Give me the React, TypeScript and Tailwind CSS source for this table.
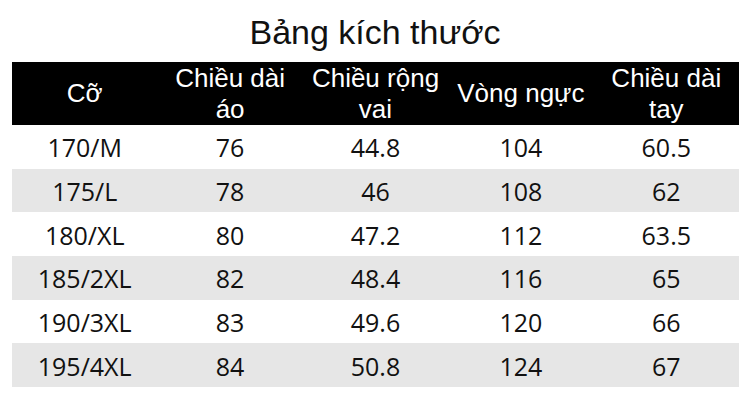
const headers: string[][] = [
  ["Cỡ"],
  ["Chiều dài", "áo"],
  ["Chiều rộng", "vai"],
  ["Vòng ngực"],
  ["Chiều dài", "tay"],
];

const rows: string[][] = [
  ["170/M", "76", "44.8", "104", "60.5"],
  ["175/L", "78", "46", "108", "62"],
  ["180/XL", "80", "47.2", "112", "63.5"],
  ["185/2XL", "82", "48.4", "116", "65"],
  ["190/3XL", "83", "49.6", "120", "66"],
  ["195/4XL", "84", "50.8", "124", "67"],
];

export default function App() {
  return (
    <div className="w-[750px] h-[400px] bg-white overflow-hidden">
      <h1 className="h-[62px] flex items-center justify-center pt-[2px] font-['Liberation_Sans',Arial,sans-serif] text-[34px] leading-none text-[#111]">
        Bảng kích thước
      </h1>
      <div className="mx-[12px] w-[727px]">
        <div className="grid grid-cols-5 h-[63px] bg-black text-white font-['Liberation_Sans',Arial,sans-serif] text-[26px] leading-[31px]">
          {headers.map((lines, i) => (
            <div key={i} className="flex flex-col items-center justify-center text-center">
              {lines.map((l) => (
                <span key={l}>{l}</span>
              ))}
            </div>
          ))}
        </div>
        <div className="grid grid-rows-6 h-[262px] font-['Open_Sans',sans-serif] text-[25px] leading-none text-[#111]">
          {rows.map((r, i) => (
            <div
              key={r[0]}
              className={`grid grid-cols-5 items-center ${i % 2 === 1 ? "bg-[#e6e6e6]" : "bg-white"}`}
            >
              {r.map((c, j) => (
                <div key={j} className="text-center pt-[2px]">
                  {c}
                </div>
              ))}
            </div>
          ))}
        </div>
      </div>
    </div>
  );
}
